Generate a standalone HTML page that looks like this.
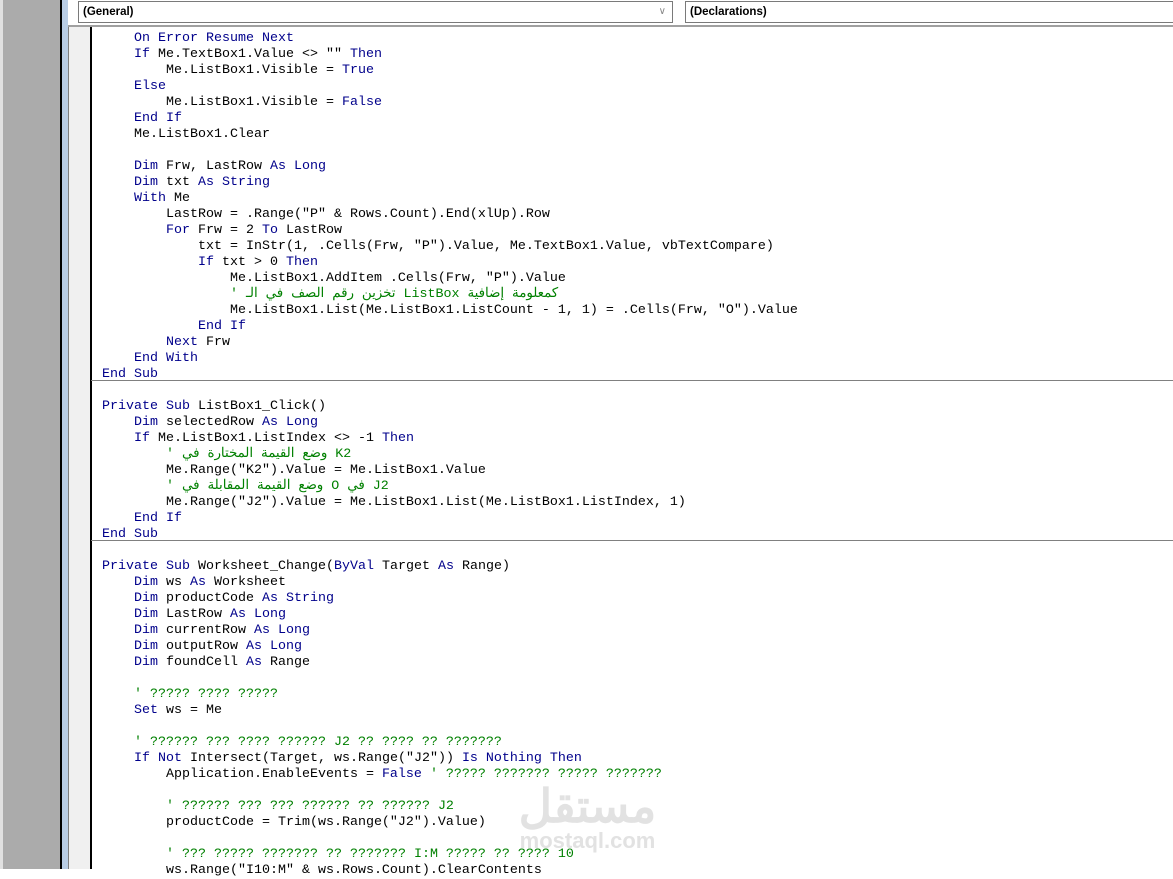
<!DOCTYPE html>
<html><head><meta charset="utf-8"><style>
body{margin:0;width:1173px;height:869px;overflow:hidden;background:#fff;position:relative;font-family:"Liberation Sans",sans-serif}
.a{position:absolute}
pre{margin:0;position:absolute;left:102px;top:31px;font-family:"Liberation Mono","Noto Sans CJK SC",monospace;font-size:13.33px;line-height:16px;color:#000}
.k{color:#00008b}.c{color:#008000}
.sep{position:absolute;left:91px;right:0;height:1px;background:#808080}
</style></head><body>
<div class="a" style="left:0;top:0;width:3px;height:869px;background:#e0e0e0"></div>
<div class="a" style="left:3px;top:0;width:57px;height:869px;background:#ababab"></div>
<div class="a" style="left:60px;top:0;width:2px;height:869px;background:#000"></div>
<div class="a" style="left:62px;top:0;width:6px;height:869px;background:#b9cde5"></div>
<div class="a" style="left:68px;top:0;width:1105px;height:26px;background:#fff"></div>
<div class="a" style="left:78px;top:1px;width:595px;height:22px;border:1px solid #7a7a7a;font-size:11.5px;font-weight:bold;line-height:20px;padding-left:4px;box-sizing:border-box">(General)<span style="position:absolute;right:6px;top:0;color:#888;font-weight:normal;font-size:10px">&#8744;</span></div>
<div class="a" style="left:685px;top:1px;width:490px;height:22px;border:1px solid #7a7a7a;font-size:11.5px;font-weight:bold;line-height:20px;padding-left:4px;box-sizing:border-box">(Declarations)</div>
<div class="a" style="left:68px;top:25px;width:1105px;height:2px;background:#a0a0a0"></div>
<div class="a" style="left:68px;top:27px;width:1px;height:842px;background:#808080"></div>
<div class="a" style="left:69px;top:27px;width:21px;height:842px;background:#f0f0f0"></div>
<div class="a" style="left:90px;top:27px;width:2px;height:842px;background:#000"></div>
<div class="sep" style="top:380px"></div>
<div class="sep" style="top:540px"></div>
<pre>    <span class="k">On Error Resume Next</span>
    <span class="k">If</span> Me.TextBox1.Value &lt;&gt; "" <span class="k">Then</span>
        Me.ListBox1.Visible = <span class="k">True</span>
    <span class="k">Else</span>
        Me.ListBox1.Visible = <span class="k">False</span>
    <span class="k">End If</span>
    Me.ListBox1.Clear

    <span class="k">Dim</span> Frw, LastRow <span class="k">As Long</span>
    <span class="k">Dim</span> txt <span class="k">As String</span>
    <span class="k">With</span> Me
        LastRow = .Range("P" &amp; Rows.Count).End(xlUp).Row
        <span class="k">For</span> Frw = 2 <span class="k">To</span> LastRow
            txt = InStr(1, .Cells(Frw, "P").Value, Me.TextBox1.Value, vbTextCompare)
            <span class="k">If</span> txt &gt; 0 <span class="k">Then</span>
                Me.ListBox1.AddItem .Cells(Frw, "P").Value
                <span class="c">' تخزين رقم الصف في الـ ListBox كمعلومة إضافية</span>
                Me.ListBox1.List(Me.ListBox1.ListCount - 1, 1) = .Cells(Frw, "O").Value
            <span class="k">End If</span>
        <span class="k">Next</span> Frw
    <span class="k">End With</span>
<span class="k">End Sub</span>

<span class="k">Private Sub</span> ListBox1_Click()
    <span class="k">Dim</span> selectedRow <span class="k">As Long</span>
    <span class="k">If</span> Me.ListBox1.ListIndex &lt;&gt; -1 <span class="k">Then</span>
        <span class="c">' وضع القيمة المختارة في K2</span>
        Me.Range("K2").Value = Me.ListBox1.Value
        <span class="c">' وضع القيمة المقابلة في O في J2</span>
        Me.Range("J2").Value = Me.ListBox1.List(Me.ListBox1.ListIndex, 1)
    <span class="k">End If</span>
<span class="k">End Sub</span>

<span class="k">Private Sub</span> Worksheet_Change(<span class="k">ByVal</span> Target <span class="k">As</span> Range)
    <span class="k">Dim</span> ws <span class="k">As</span> Worksheet
    <span class="k">Dim</span> productCode <span class="k">As String</span>
    <span class="k">Dim</span> LastRow <span class="k">As Long</span>
    <span class="k">Dim</span> currentRow <span class="k">As Long</span>
    <span class="k">Dim</span> outputRow <span class="k">As Long</span>
    <span class="k">Dim</span> foundCell <span class="k">As</span> Range

    <span class="c">' ????? ???? ?????</span>
    <span class="k">Set</span> ws = Me

    <span class="c">' ?????? ??? ???? ?????? J2 ?? ???? ?? ???????</span>
    <span class="k">If Not</span> Intersect(Target, ws.Range("J2")) <span class="k">Is Nothing Then</span>
        Application.EnableEvents = <span class="k">False</span> <span class="c">' ????? ??????? ????? ???????</span>

        <span class="c">' ?????? ??? ??? ?????? ?? ?????? J2</span>
        productCode = Trim(ws.Range("J2").Value)

        <span class="c">' ??? ????? ??????? ?? ??????? I:M ????? ?? ???? 10</span>
        ws.Range("I10:M" &amp; ws.Rows.Count).ClearContents
</pre>
<div class="a" style="left:515px;top:783px;width:145px;text-align:center;color:#e2e2e2;font-family:'Liberation Sans','Noto Sans CJK SC',sans-serif">
<div style="font-size:46px;font-weight:bold;line-height:46px">مستقل</div>
<div style="font-size:22px;font-weight:bold;line-height:24px">mostaql.com</div></div>
</body></html>
